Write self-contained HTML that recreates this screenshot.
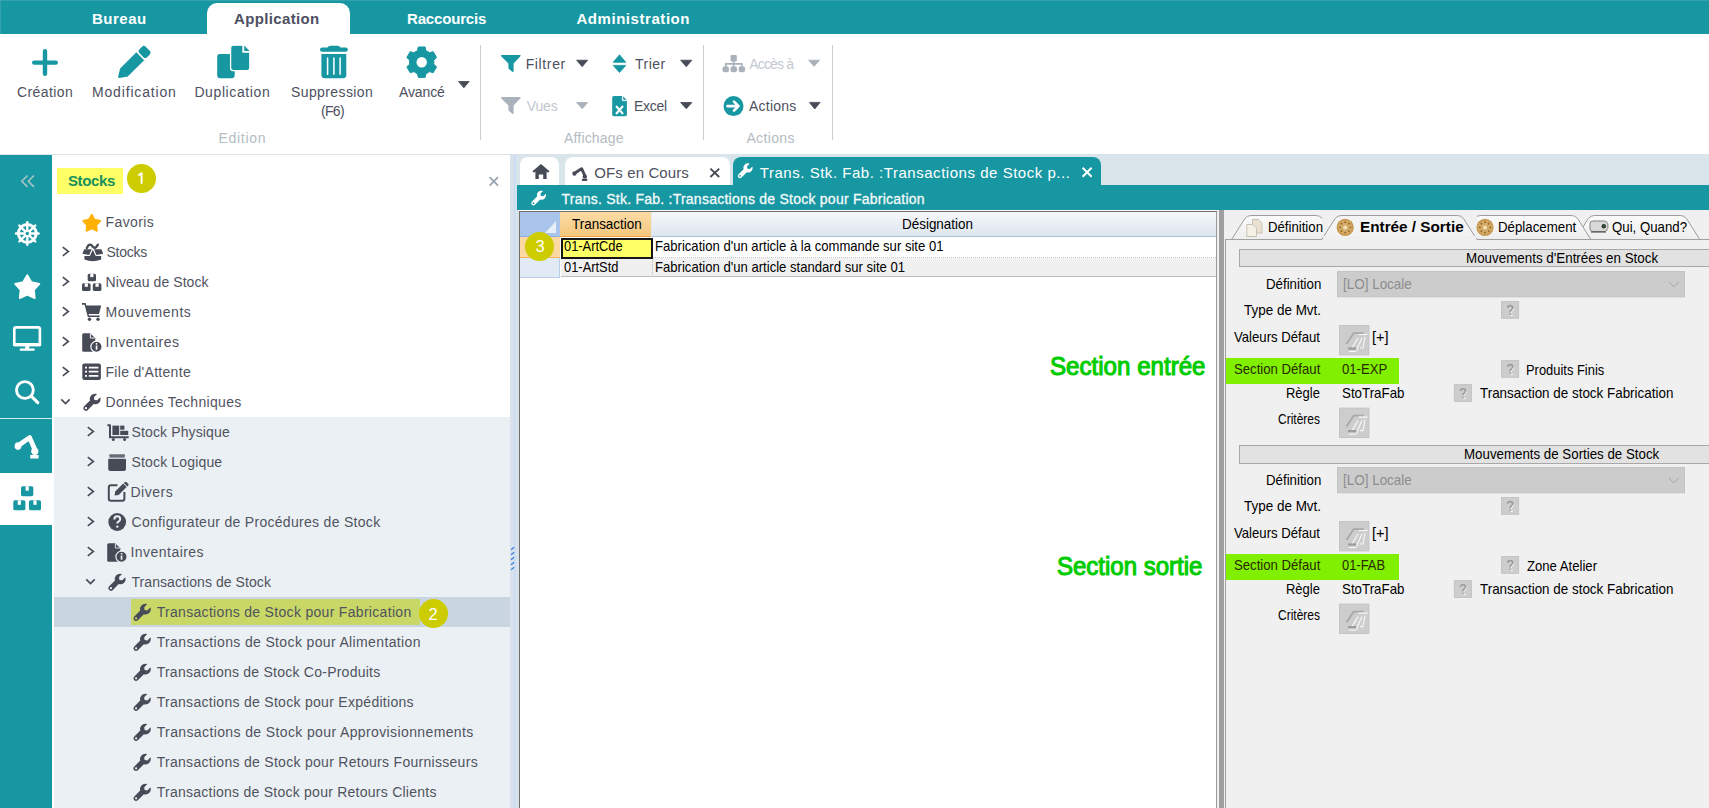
<!DOCTYPE html>
<html><head><meta charset="utf-8">
<style>
*{margin:0;padding:0;box-sizing:border-box}
html,body{width:1709px;height:808px;overflow:hidden;background:#fff;font-family:"Liberation Sans",sans-serif}
.a{position:absolute}
.t{position:absolute;line-height:1;white-space:nowrap}
.teal{background:#1797a2}
svg{position:absolute;overflow:visible}
</style></head><body>

<!-- top bar -->
<div class="a teal" style="left:0;top:0;width:1709px;height:34px"></div>
<div class="a" style="left:0;top:0;width:1709px;height:1px;background:#33a3ab"></div>
<div class="a" style="left:0;top:0;width:1px;height:34px;background:#33a3ab"></div>
<div class="a" style="left:207px;top:3px;width:143px;height:31px;background:#fff;border-radius:10px 10px 0 0"></div>
<!-- ribbon separators -->
<div class="a" style="left:480px;top:45px;width:1px;height:95px;background:#c9ced4"></div>
<div class="a" style="left:703px;top:45px;width:1px;height:95px;background:#c9ced4"></div>
<div class="a" style="left:832px;top:45px;width:1px;height:95px;background:#c9ced4"></div>
<!-- ribbon bottom line -->
<div class="a" style="left:0;top:154px;width:1709px;height:1px;background:#dce4eb"></div>
<!-- left sidebar -->
<div class="a teal" style="left:0;top:155px;width:52px;height:653px"></div>
<div class="a" style="left:0;top:418px;width:52px;height:1px;background:#d9ecee"></div>
<div class="a" style="left:0;top:473px;width:52px;height:52px;background:#fff"></div>
<!-- tree panel -->
<div class="a" style="left:54px;top:417px;width:456px;height:391px;background:#ebf0f4"></div>
<div class="a" style="left:54px;top:597px;width:456px;height:30px;background:#c9d6e1"></div>
<div class="a" style="left:131px;top:599px;width:289px;height:26px;background:#c8d766"></div>
<div class="a" style="left:57px;top:168px;width:66px;height:26px;background:#ffff66"></div>
<!-- splitter -->
<div class="a" style="left:510px;top:155px;width:9px;height:653px;background:#d9e2ea"></div>
<div class="a" style="left:514px;top:155px;width:1px;height:653px;background:#c4dcf8"></div>
<div class="a" style="left:515px;top:155px;width:1px;height:653px;background:#d0e0f2"></div>
<!-- content tab strip -->
<div class="a" style="left:516px;top:155px;width:1193px;height:30px;background:#dae4eb"></div>
<div class="a" style="left:520px;top:157px;width:39px;height:28px;background:#fff;border-radius:8px 8px 0 0"></div>
<div class="a" style="left:565px;top:157px;width:165px;height:28px;background:#fff;border-radius:8px 8px 0 0"></div>
<div class="a teal" style="left:733px;top:157px;width:368px;height:28px;border-radius:8px 8px 0 0"></div>
<div class="a teal" style="left:517px;top:185px;width:1192px;height:25px"></div>
<!-- grid -->
<div class="a" style="left:1216px;top:210px;width:8px;height:598px;background:#f0f0f0"></div>
<div class="a" style="left:519px;top:211px;width:698px;height:597px;background:#fff;border-left:1px solid #6e6e6e;border-top:1px solid #6e6e6e;border-right:1px solid #9a9a9a"></div>
<div class="a" style="left:1219px;top:210px;width:5px;height:598px;background:#a0a0a0"></div>
<!-- grid header -->
<div class="a" style="left:520px;top:212px;width:40px;height:24px;background:#a9c5eb"></div>
<div class="a" style="left:520px;top:236px;width:40px;height:1px;background:#8fb0dc"></div>
<div class="a" style="left:560px;top:212px;width:91px;height:25px;background:linear-gradient(#fbdca6,#f4c77d);border-bottom:1px solid #f0a040"></div>
<div class="a" style="left:651px;top:212px;width:565px;height:25px;background:linear-gradient(#f6f8fb,#dde5ef);border-bottom:1px solid #a8c0dc;border-left:1px solid #e4e9f0"></div>
<svg style="left:520px;top:212px" width="40" height="24"><path d="M36,9 L36,21 L25,21 Z" fill="#e6eef8"/></svg>
<!-- grid rows -->
<div class="a" style="left:520px;top:237px;width:40px;height:21px;background:#fcd9a3;border-bottom:1px solid #f5b060"></div>
<div class="a" style="left:651px;top:237px;width:565px;height:21px;background:#fff;border-bottom:1px dotted #c8c8c8"></div>
<div class="a" style="left:520px;top:258px;width:40px;height:19px;background:#e1eaf5;border-right:1px solid #b8cde6"></div>
<div class="a" style="left:561px;top:258px;width:655px;height:19px;background:#f0f0f0;border-bottom:1px solid #bdbdbd"></div>
<div class="a" style="left:652px;top:258px;width:1px;height:19px;border-left:1px dotted #c0c0c0"></div>
<div class="a" style="left:520px;top:277px;width:40px;height:1px;background:#b8cde6"></div>
<div class="a" style="left:561px;top:238px;width:92px;height:21px;background:#ffff66;border:2px solid #161616"></div>
<!-- right panel -->
<div class="a" style="left:1224px;top:210px;width:485px;height:598px;background:#f0f0f0"></div>
<div class="a" style="left:1225px;top:239px;width:1px;height:569px;background:#a0a0a0"></div>
<div class="a" style="left:1226px;top:358px;width:173px;height:26px;background:#80f000"></div>
<div class="a" style="left:1226px;top:554px;width:173px;height:26px;background:#80f000"></div>
<div class="a" style="left:1239px;top:249px;width:470px;height:18px;background:#e2e2e2;border:1px solid #a8a8a8;border-right:none"></div>
<div class="a" style="left:1239px;top:445px;width:470px;height:19px;background:#e2e2e2;border:1px solid #a8a8a8;border-right:none"></div>
<svg style="left:0;top:0" width="1709" height="808" viewBox="0 0 1709 808">
<path d="M45,51.2 V73.8 M34.2,62.6 H55.8" stroke="#1797a2" stroke-width="4.4" stroke-linecap="round" fill="none"/>
<g transform="translate(118.6,77.9) rotate(-45)" fill="#1797a2"><path d="M0.2,-0.9 Q-0.3,0 0.5,0.6 L7.5,5.5 V-5.5 Z"/><rect x="7" y="-5.5" width="23.6" height="11"/><rect x="32.2" y="-5.5" width="9" height="11" rx="2.6"/></g>
<rect x="217.2" y="54" width="17.5" height="24.2" rx="2.4" fill="#1797a2"/>
<path d="M233.4,45.2 H243 V52 H249.8 V68 Q249.8,70.6 247.2,70.6 H233.4 Q230.6,70.6 230.6,68 V48 Q230.6,45.2 233.4,45.2 Z" fill="#1797a2" stroke="#fff" stroke-width="1.3"/>
<path d="M244.2,45.6 L249.6,51 L244.2,51 Z" fill="#1797a2"/>
<rect x="320" y="47.4" width="27.8" height="4.4" rx="2.2" fill="#1797a2"/>
<path d="M327.6,48 Q328,45.8 330.5,45.8 H337.5 Q340,45.8 340.4,48 Z" fill="#1797a2"/>
<path d="M321.4,53.9 H346.3 V75 Q346.3,78.3 343,78.3 H324.7 Q321.4,78.3 321.4,75 Z" fill="#1797a2"/>
<path d="M327.6,58 V74.2 M333.9,58 V74.2 M340.1,58 V74.2" stroke="#fff" stroke-width="1.5" stroke-linecap="round"/>
<path d="M417.45,50.76 L418.30,46.98 L425.10,46.98 L425.95,50.76 A12.2,12.2 0 0 1 429.48,52.80 L433.19,51.64 L436.59,57.53 L433.73,60.16 A12.2,12.2 0 0 1 433.73,64.24 L436.59,66.87 L433.19,72.76 L429.48,71.60 A12.2,12.2 0 0 1 425.95,73.64 L425.10,77.42 L418.30,77.42 L417.45,73.64 A12.2,12.2 0 0 1 413.92,71.60 L410.21,72.76 L406.81,66.87 L409.67,64.24 A12.2,12.2 0 0 1 409.67,60.16 L406.81,57.53 L410.21,51.64 L413.92,52.80 A12.2,12.2 0 0 1 417.45,50.76 Z" fill="#1797a2" stroke="#1797a2" stroke-width="1" stroke-linejoin="round"/><circle cx="421.7" cy="62.2" r="5.2" fill="#fff"/>
<path d="M458.5,81.5 L469.2,81.5 L463.85,87.8 Z" fill="#474b57" stroke="#474b57" stroke-width="0.8" stroke-linejoin="round"/>
<path d="M501.6,55 H520 Q521.2,55 520.4,56.2 L513.6,63.6 V71.2 Q513.4,72.3 512.3,71.8 L509,69 Q508.4,68.5 508.4,67.6 V63.6 L501.2,56.2 Q500.6,55 501.6,55 Z" fill="#1797a2"/>
<path d="M501.6,97 H520 Q521.2,97 520.4,98.2 L513.6,105.6 V113.2 Q513.4,114.3 512.3,113.8 L509,111 Q508.4,110.5 508.4,109.6 V105.6 L501.2,98.2 Q500.6,97 501.6,97 Z" fill="#a9b1ba"/>
<path d="M576.6,60.2 L587.7,60.2 L582.1500000000001,66.7 Z" fill="#474b57" stroke="#474b57" stroke-width="0.8" stroke-linejoin="round"/>
<path d="M576.6,102.5 L587.7,102.5 L582.1500000000001,108.8 Z" fill="#a9b1ba" stroke="#a9b1ba" stroke-width="0.8" stroke-linejoin="round"/>
<path d="M613.2,62.3 H625.8 L619.5,54.8 Z M613.2,65.4 H625.8 L619.5,72.5 Z" fill="#1797a2" stroke="#1797a2" stroke-width="0.8" stroke-linejoin="round"/>
<path d="M680.6,60.2 L691.9,60.2 L686.25,66.7 Z" fill="#474b57" stroke="#474b57" stroke-width="0.8" stroke-linejoin="round"/>
<path d="M613.8,96.1 H622.4 L626.9,100.6 V114.4 Q626.9,116.2 625.1,116.2 H614 Q612.2,116.2 612.2,114.4 V97.9 Q612.2,96.1 613.8,96.1 Z" fill="#1797a2"/>
<path d="M622.4,96.1 V100.6 H626.9" fill="#fff" stroke="#fff" stroke-width="0.9"/>
<path d="M623.2,96.5 L626.5,99.8 L623.2,99.8 Z" fill="#1797a2"/>
<path d="M616,106 L623,114 M623,106 L616,114" stroke="#fff" stroke-width="2"/>
<path d="M680.6,102.5 L691.9,102.5 L686.25,108.8 Z" fill="#474b57" stroke="#474b57" stroke-width="0.8" stroke-linejoin="round"/>
<g fill="#a9b1ba"><rect x="730.6" y="55.1" width="6.2" height="6.3" rx="1.2"/><rect x="722.5" y="66.2" width="6.5" height="6" rx="2.2"/><rect x="730.5" y="66.2" width="6.5" height="6" rx="2.2"/><rect x="738.6" y="66.2" width="6.5" height="6" rx="2.2"/></g><path d="M733.7,61 V66.5 M725.7,66.5 V63.9 H741.8 V66.5" stroke="#a9b1ba" stroke-width="1.6" fill="none"/>
<path d="M808.6,60.2 L819.7,60.2 L814.1500000000001,66.3 Z" fill="#a9b1ba" stroke="#a9b1ba" stroke-width="0.8" stroke-linejoin="round"/>
<circle cx="733.5" cy="106.1" r="10" fill="#1797a2"/>
<path d="M727.5,106.1 H738 M734,101.6 L738.5,106.1 L734,110.6" stroke="#fff" stroke-width="2.6" fill="none" stroke-linecap="round" stroke-linejoin="round"/>
<path d="M809.4,102.4 L820.1,102.4 L814.75,109 Z" fill="#474b57" stroke="#474b57" stroke-width="0.8" stroke-linejoin="round"/>
<path d="M27.5,175.5 L21.8,181.2 L27.5,186.9 M34,175.5 L28.3,181.2 L34,186.9" stroke="#a6c3c7" stroke-width="1.6" fill="none"/>
<circle cx="27.3" cy="233.5" r="8.9" stroke="#fff" stroke-width="3" fill="none"/><path d="M30.30,233.50 L38.60,233.50 M29.42,235.62 L35.29,241.49 M27.30,236.50 L27.30,244.80 M25.18,235.62 L19.31,241.49 M24.30,233.50 L16.00,233.50 M25.18,231.38 L19.31,225.51 M27.30,230.50 L27.30,222.20 M29.42,231.38 L35.29,225.51 " stroke="#fff" stroke-width="2.4" stroke-linecap="round"/><circle cx="27.3" cy="233.5" r="3.6" fill="#fff"/><circle cx="27.3" cy="233.5" r="1.7" fill="#1797a2"/>
<polygon points="27.25,275.10 31.36,282.15 39.33,283.88 33.89,289.96 34.71,298.07 27.25,294.79 19.79,298.07 20.61,289.96 15.17,283.88 23.14,282.15" fill="#fff" stroke="#fff" stroke-width="1.8" stroke-linejoin="round"/>
<rect x="14.3" y="327.4" width="25.6" height="17.6" rx="1.8" stroke="#fff" stroke-width="2.6" fill="none"/><rect x="13" y="343" width="28.2" height="3.2" rx="1" fill="#fff"/><rect x="25.2" y="345" width="4" height="4" fill="#fff"/><rect x="19.7" y="348.5" width="15" height="2.2" rx="0.8" fill="#fff"/>
<circle cx="24.9" cy="390" r="8.4" stroke="#fff" stroke-width="2.9" fill="none"/><path d="M31.2,396.2 L37.8,402.6" stroke="#fff" stroke-width="3.2" stroke-linecap="round"/>
<g fill="#fff"><ellipse cx="18" cy="446.1" rx="3.4" ry="3.8"/><circle cx="34.8" cy="451.3" r="3.6"/><rect x="30.2" y="455" width="8.4" height="3.6" rx="0.6"/></g><path d="M20.8,443.8 L29.6,437.6 L34.2,448" stroke="#fff" stroke-width="4.8" stroke-linecap="round" stroke-linejoin="round" fill="none"/>
<rect x="21" y="486.2" width="12.3" height="10" rx="1.6" fill="#1797a2"/><rect x="25.549999999999997" y="486.2" width="3.2" height="4.5" fill="#fff"/>
<rect x="13.3" y="500.3" width="12.1" height="10" rx="1.6" fill="#1797a2"/><rect x="17.75" y="500.3" width="3.2" height="4.5" fill="#fff"/>
<rect x="29" y="500.3" width="12" height="10" rx="1.6" fill="#1797a2"/><rect x="33.4" y="500.3" width="3.2" height="4.5" fill="#fff"/>
<path d="M511.4,549.4 L513.8,547.6" stroke="#3d7fdc" stroke-width="1.3" stroke-linecap="round"/><path d="M511.4,554.4 L513.8,552.6" stroke="#3d7fdc" stroke-width="1.3" stroke-linecap="round"/><path d="M511.4,559.4 L513.8,557.6" stroke="#3d7fdc" stroke-width="1.3" stroke-linecap="round"/><path d="M511.4,564.4 L513.8,562.6" stroke="#3d7fdc" stroke-width="1.3" stroke-linecap="round"/><path d="M511.4,569.4 L513.8,567.6" stroke="#3d7fdc" stroke-width="1.3" stroke-linecap="round"/>
<path d="M489.6,177.2 L498,185.6 M498,177.2 L489.6,185.6" stroke="#9aa4ae" stroke-width="1.8"/>
<path d="M62.8,247.2 L68.39999999999999,251.5 L62.8,255.8" stroke="#474b57" stroke-width="1.6" fill="none"/>
<path d="M62.8,277.2 L68.39999999999999,281.5 L62.8,285.8" stroke="#474b57" stroke-width="1.6" fill="none"/>
<path d="M62.8,307.2 L68.39999999999999,311.5 L62.8,315.8" stroke="#474b57" stroke-width="1.6" fill="none"/>
<path d="M62.8,337.2 L68.39999999999999,341.5 L62.8,345.8" stroke="#474b57" stroke-width="1.6" fill="none"/>
<path d="M62.8,367.2 L68.39999999999999,371.5 L62.8,375.8" stroke="#474b57" stroke-width="1.6" fill="none"/>
<path d="M61.3,399.4 L65.5,403.6 L69.7,399.4" stroke="#474b57" stroke-width="1.6" fill="none"/>
<path d="M87.8,427.2 L93.39999999999999,431.5 L87.8,435.8" stroke="#474b57" stroke-width="1.6" fill="none"/>
<path d="M87.8,457.2 L93.39999999999999,461.5 L87.8,465.8" stroke="#474b57" stroke-width="1.6" fill="none"/>
<path d="M87.8,487.2 L93.39999999999999,491.5 L87.8,495.8" stroke="#474b57" stroke-width="1.6" fill="none"/>
<path d="M87.8,517.2 L93.39999999999999,521.5 L87.8,525.8" stroke="#474b57" stroke-width="1.6" fill="none"/>
<path d="M87.8,547.2 L93.39999999999999,551.5 L87.8,555.8" stroke="#474b57" stroke-width="1.6" fill="none"/>
<path d="M86.3,579.4 L90.5,583.6 L94.7,579.4" stroke="#474b57" stroke-width="1.6" fill="none"/>
<polygon points="91.70,214.40 94.67,219.51 100.45,220.76 96.51,225.16 97.11,231.04 91.70,228.66 86.29,231.04 86.89,225.16 82.95,220.76 88.73,219.51" fill="#ffb000" stroke="#ffb000" stroke-width="1.4" stroke-linejoin="round"/>
<g fill="#474b57"><path d="M84.2,249.2 H91.6 L89.2,255 L82.4,253.8 Z"/><path d="M101.4,249.2 H94 L96.4,255 L103.2,253.8 Z"/><path d="M84.4,256.1 H89.9 L92.8,249.8 L95.7,256.1 H101.2 V259.6 Q92.8,263 84.4,259.6 Z"/></g><path d="M86.8,248.2 Q88.4,244 90.8,244.8 Q92.2,245.6 93.4,247.4 Q95.6,248.8 97.9,244.6" stroke="#474b57" stroke-width="2.3" fill="none" stroke-linecap="round"/>
<rect x="87.7" y="273.7" width="8.3" height="7.6" rx="1.6" fill="#474b57"/><rect x="90.25000000000001" y="273.7" width="3.2" height="3.4" fill="#fff"/><rect x="82" y="283.3" width="8.6" height="7.7" rx="1.6" fill="#474b57"/><rect x="84.7" y="283.3" width="3.2" height="3.5" fill="#fff"/><rect x="92.8" y="283.3" width="8.6" height="7.7" rx="1.6" fill="#474b57"/><rect x="95.5" y="283.3" width="3.2" height="3.5" fill="#fff"/>
<g fill="#474b57"><path d="M82,303 H85.6 L86.4,305.5 H101.2 L99,314 H88.5 L89,315.5 H99.6 V317 H87.8 L84.6,304.8 H82 Z"/><circle cx="89.5" cy="319.3" r="1.7"/><circle cx="98" cy="319.3" r="1.7"/></g>
<g transform="translate(82.2,333.2)"><path d="M0,1.5 Q0,0 1.5,0 H8 L13,5 V17 Q13,18.5 11.5,18.5 H1.5 Q0,18.5 0,17 Z" fill="#474b57"/><path d="M8.2,0.3 V4.8 H12.7" stroke="#fff" stroke-width="0.9" fill="none"/><circle cx="14.3" cy="13.6" r="5.6" fill="#474b57" stroke="#fff" stroke-width="1.2"/><rect x="13.5" y="12.3" width="1.7" height="4.2" fill="#fff"/><circle cx="14.35" cy="10.6" r="0.9" fill="#fff"/></g>
<rect x="82.3" y="363.4" width="18.6" height="16.6" rx="2" fill="#474b57"/><path d="M85,367.6 H87 M85,371.7 H87 M85,375.8 H87 M88.8,367.6 H98.4 M88.8,371.7 H98.4 M88.8,375.8 H98.4" stroke="#fff" stroke-width="1.8"/>
<g transform="translate(83,393.5) scale(1.0)"><path d="M17.3,3.7 L14.2,6.8 L11.4,6.4 L11,3.6 L14.1,0.5 Q10.5,-0.6 8.2,1.8 Q6.2,3.9 7,7 L0.9,13.1 Q-0.6,14.9 1,16.6 Q2.8,18.2 4.6,16.7 L10.7,10.6 Q13.8,11.5 15.9,9.4 Q18.3,7.2 17.3,3.7 Z" fill="#474b57"/><circle cx="2.9" cy="14.7" r="1.1" fill="#fff"/></g>
<g fill="#474b57"><path d="M107.4,424.2 H110 Q111,424.2 111,425.2 V436.2 H128.7 V438.2 H109 V426.2 H107.4 Z"/><rect x="112.4" y="425.6" width="6.8" height="9.4"/><rect x="120.2" y="425.6" width="4.2" height="4.1"/><rect x="120.2" y="430.8" width="8" height="4.2"/><circle cx="113.3" cy="439.6" r="1.5"/><circle cx="124.6" cy="439.6" r="1.5"/></g>
<g fill="#474b57"><rect x="109.2" y="454.3" width="15.8" height="2.6" rx="0.8" opacity="0.8"/><rect x="108.2" y="457.6" width="17.8" height="13.4" rx="2"/></g><path d="M108.2,458.5 H126" stroke="#ebf0f4" stroke-width="0.8"/>
<path d="M117.5,485.2 H111 Q108.8,485.2 108.8,487.4 V498.6 Q108.8,500.8 111,500.8 H122.2 Q124.4,500.8 124.4,498.6 V492" stroke="#474b57" stroke-width="2" fill="none"/><path d="M114.6,495.4 L115.2,491.6 L123.2,483.6 L126.6,487 L118.6,495 Z" fill="#474b57"/><path d="M124.6,482.2 Q125.6,481.4 126.6,482.2 L128.2,483.8 Q129,484.8 128.2,485.8 L127.3,486.5 L123.8,483 Z" fill="#474b57"/>
<circle cx="117.2" cy="522" r="8.9" fill="#474b57"/><path d="M114.4,519.5 Q114.4,516.3 117.3,516.3 Q120.2,516.3 120.2,519.1 Q120.2,520.8 118.2,521.8 Q117.3,522.4 117.3,523.6" stroke="#ebf0f4" stroke-width="2" fill="none"/><circle cx="117.3" cy="526.6" r="1.2" fill="#ebf0f4"/>
<g transform="translate(107.2,543.2)"><path d="M0,1.5 Q0,0 1.5,0 H8 L13,5 V17 Q13,18.5 11.5,18.5 H1.5 Q0,18.5 0,17 Z" fill="#474b57"/><path d="M8.2,0.3 V4.8 H12.7" stroke="#ebf0f4" stroke-width="0.9" fill="none"/><circle cx="14.3" cy="13.6" r="5.6" fill="#474b57" stroke="#ebf0f4" stroke-width="1.2"/><rect x="13.5" y="12.3" width="1.7" height="4.2" fill="#ebf0f4"/><circle cx="14.35" cy="10.6" r="0.9" fill="#ebf0f4"/></g>
<g transform="translate(108,573.5) scale(1.0)"><path d="M17.3,3.7 L14.2,6.8 L11.4,6.4 L11,3.6 L14.1,0.5 Q10.5,-0.6 8.2,1.8 Q6.2,3.9 7,7 L0.9,13.1 Q-0.6,14.9 1,16.6 Q2.8,18.2 4.6,16.7 L10.7,10.6 Q13.8,11.5 15.9,9.4 Q18.3,7.2 17.3,3.7 Z" fill="#474b57"/><circle cx="2.9" cy="14.7" r="1.1" fill="#ebf0f4"/></g>
<g transform="translate(133.2,603.6) scale(1.0)"><path d="M17.3,3.7 L14.2,6.8 L11.4,6.4 L11,3.6 L14.1,0.5 Q10.5,-0.6 8.2,1.8 Q6.2,3.9 7,7 L0.9,13.1 Q-0.6,14.9 1,16.6 Q2.8,18.2 4.6,16.7 L10.7,10.6 Q13.8,11.5 15.9,9.4 Q18.3,7.2 17.3,3.7 Z" fill="#474b57"/><circle cx="2.9" cy="14.7" r="1.1" fill="#c8d766"/></g>
<g transform="translate(133.2,633.6) scale(1.0)"><path d="M17.3,3.7 L14.2,6.8 L11.4,6.4 L11,3.6 L14.1,0.5 Q10.5,-0.6 8.2,1.8 Q6.2,3.9 7,7 L0.9,13.1 Q-0.6,14.9 1,16.6 Q2.8,18.2 4.6,16.7 L10.7,10.6 Q13.8,11.5 15.9,9.4 Q18.3,7.2 17.3,3.7 Z" fill="#474b57"/><circle cx="2.9" cy="14.7" r="1.1" fill="#ebf0f4"/></g>
<g transform="translate(133.2,663.6) scale(1.0)"><path d="M17.3,3.7 L14.2,6.8 L11.4,6.4 L11,3.6 L14.1,0.5 Q10.5,-0.6 8.2,1.8 Q6.2,3.9 7,7 L0.9,13.1 Q-0.6,14.9 1,16.6 Q2.8,18.2 4.6,16.7 L10.7,10.6 Q13.8,11.5 15.9,9.4 Q18.3,7.2 17.3,3.7 Z" fill="#474b57"/><circle cx="2.9" cy="14.7" r="1.1" fill="#ebf0f4"/></g>
<g transform="translate(133.2,693.6) scale(1.0)"><path d="M17.3,3.7 L14.2,6.8 L11.4,6.4 L11,3.6 L14.1,0.5 Q10.5,-0.6 8.2,1.8 Q6.2,3.9 7,7 L0.9,13.1 Q-0.6,14.9 1,16.6 Q2.8,18.2 4.6,16.7 L10.7,10.6 Q13.8,11.5 15.9,9.4 Q18.3,7.2 17.3,3.7 Z" fill="#474b57"/><circle cx="2.9" cy="14.7" r="1.1" fill="#ebf0f4"/></g>
<g transform="translate(133.2,723.6) scale(1.0)"><path d="M17.3,3.7 L14.2,6.8 L11.4,6.4 L11,3.6 L14.1,0.5 Q10.5,-0.6 8.2,1.8 Q6.2,3.9 7,7 L0.9,13.1 Q-0.6,14.9 1,16.6 Q2.8,18.2 4.6,16.7 L10.7,10.6 Q13.8,11.5 15.9,9.4 Q18.3,7.2 17.3,3.7 Z" fill="#474b57"/><circle cx="2.9" cy="14.7" r="1.1" fill="#ebf0f4"/></g>
<g transform="translate(133.2,753.6) scale(1.0)"><path d="M17.3,3.7 L14.2,6.8 L11.4,6.4 L11,3.6 L14.1,0.5 Q10.5,-0.6 8.2,1.8 Q6.2,3.9 7,7 L0.9,13.1 Q-0.6,14.9 1,16.6 Q2.8,18.2 4.6,16.7 L10.7,10.6 Q13.8,11.5 15.9,9.4 Q18.3,7.2 17.3,3.7 Z" fill="#474b57"/><circle cx="2.9" cy="14.7" r="1.1" fill="#ebf0f4"/></g>
<g transform="translate(133.2,783.6) scale(1.0)"><path d="M17.3,3.7 L14.2,6.8 L11.4,6.4 L11,3.6 L14.1,0.5 Q10.5,-0.6 8.2,1.8 Q6.2,3.9 7,7 L0.9,13.1 Q-0.6,14.9 1,16.6 Q2.8,18.2 4.6,16.7 L10.7,10.6 Q13.8,11.5 15.9,9.4 Q18.3,7.2 17.3,3.7 Z" fill="#474b57"/><circle cx="2.9" cy="14.7" r="1.1" fill="#ebf0f4"/></g>
<path d="M532.4,171.2 L541,163.9 L549.5,171.2 L548,172.8 L546.6,171.6 V178.9 H543.2 V174.4 H538.8 V178.9 H535.4 V171.6 L534,172.8 Z" fill="#474b57"/>
<g transform="translate(572.3,166.4) scale(0.62,0.585) translate(-14.6,-433.8)"><g fill="#474b57"><ellipse cx="18" cy="446.1" rx="3.4" ry="3.8"/><circle cx="34.8" cy="451.3" r="3.6"/><rect x="30.2" y="455" width="8.4" height="3.6" rx="0.6"/></g><path d="M20.8,443.8 L29.6,437.6 L34.2,448" stroke="#474b57" stroke-width="4.8" stroke-linecap="round" stroke-linejoin="round" fill="none"/></g>
<path d="M710.4,168.6 L719.2,177 M719.2,168.6 L710.4,177" stroke="#474b57" stroke-width="1.9"/>
<g transform="translate(737.6,163.2) scale(0.86)"><path d="M17.3,3.7 L14.2,6.8 L11.4,6.4 L11,3.6 L14.1,0.5 Q10.5,-0.6 8.2,1.8 Q6.2,3.9 7,7 L0.9,13.1 Q-0.6,14.9 1,16.6 Q2.8,18.2 4.6,16.7 L10.7,10.6 Q13.8,11.5 15.9,9.4 Q18.3,7.2 17.3,3.7 Z" fill="#fff"/><circle cx="2.9" cy="14.7" r="1.1" fill="#1797a2"/></g>
<path d="M1082.6,167.8 L1091.6,176.8 M1091.6,167.8 L1082.6,176.8" stroke="#fff" stroke-width="2"/>
<g transform="translate(531,190.5) scale(0.86)"><path d="M17.3,3.7 L14.2,6.8 L11.4,6.4 L11,3.6 L14.1,0.5 Q10.5,-0.6 8.2,1.8 Q6.2,3.9 7,7 L0.9,13.1 Q-0.6,14.9 1,16.6 Q2.8,18.2 4.6,16.7 L10.7,10.6 Q13.8,11.5 15.9,9.4 Q18.3,7.2 17.3,3.7 Z" fill="#fff"/><circle cx="2.9" cy="14.7" r="1.1" fill="#1797a2"/></g>
<defs><linearGradient id="tabg" x1="0" y1="0" x2="0" y2="1"><stop offset="0" stop-color="#fafafa"/><stop offset="1" stop-color="#eeeeee"/></linearGradient></defs>
<path d="M1575,239.5 L1588.3,218.5 Q1590.8,215.5 1594.3,215.5 H1680.5 Q1684.0,215.5 1686.5,218.5 L1699.8,239.5" fill="url(#tabg)" stroke="#9c9c9c" stroke-width="1"/>
<path d="M1461,239.5 L1474.3,218.5 Q1476.8,215.5 1480.3,215.5 H1571.6000000000001 Q1575.1000000000001,215.5 1577.6000000000001,218.5 L1590.9,239.5" fill="url(#tabg)" stroke="#9c9c9c" stroke-width="1"/>
<path d="M1231.6,239.5 L1244.8999999999999,218.5 Q1247.3999999999999,215.5 1250.8999999999999,215.5 H1316.2 Q1319.7,215.5 1322.2,218.5 L1335.5,239.5" fill="url(#tabg)" stroke="#9c9c9c" stroke-width="1"/>
<path d="M1225.5,808 V239.5 H1709" fill="none" stroke="#a0a0a0" stroke-width="1"/>
<rect x="1322" y="216" width="155" height="24.5" fill="#f0f0f0"/>
<path d="M1321.8,239.5 L1335.1,218.5 Q1337.6,215.5 1341.1,215.5 H1457.5 Q1461.0,215.5 1463.5,218.5 L1476.8,239.5" fill="#f3f3f3" stroke="#9c9c9c" stroke-width="1"/>
<rect x="1323" y="236" width="153" height="4" fill="#f0f0f0"/>
<g stroke="#bdb6a6" stroke-width="0.8"><path d="M1252.5,219.5 H1258.5 L1262,223 V233 H1252.5 Z" fill="#e9e2d2"/><path d="M1246.8,224.5 H1253 L1256.5,228 V236.5 H1246.8 Z" fill="#f6f1e6"/></g>
<circle cx="1345.2" cy="227.4" r="8.6" fill="#c89a52"/><circle cx="1345.2" cy="227.4" r="7" fill="#d4aa66"/><circle cx="1350.40" cy="227.40" r="0.9" fill="#8a6428"/><circle cx="1348.88" cy="231.08" r="0.9" fill="#8a6428"/><circle cx="1345.20" cy="232.60" r="0.9" fill="#8a6428"/><circle cx="1341.52" cy="231.08" r="0.9" fill="#8a6428"/><circle cx="1340.00" cy="227.40" r="0.9" fill="#8a6428"/><circle cx="1341.52" cy="223.72" r="0.9" fill="#8a6428"/><circle cx="1345.20" cy="222.20" r="0.9" fill="#8a6428"/><circle cx="1348.88" cy="223.72" r="0.9" fill="#8a6428"/><circle cx="1345.2" cy="227.4" r="2" fill="#f2e0b8"/>
<circle cx="1485" cy="227.4" r="8.6" fill="#c89a52"/><circle cx="1485" cy="227.4" r="7" fill="#d4aa66"/><circle cx="1490.20" cy="227.40" r="0.9" fill="#8a6428"/><circle cx="1488.68" cy="231.08" r="0.9" fill="#8a6428"/><circle cx="1485.00" cy="232.60" r="0.9" fill="#8a6428"/><circle cx="1481.32" cy="231.08" r="0.9" fill="#8a6428"/><circle cx="1479.80" cy="227.40" r="0.9" fill="#8a6428"/><circle cx="1481.32" cy="223.72" r="0.9" fill="#8a6428"/><circle cx="1485.00" cy="222.20" r="0.9" fill="#8a6428"/><circle cx="1488.68" cy="223.72" r="0.9" fill="#8a6428"/><circle cx="1485" cy="227.4" r="2" fill="#f2e0b8"/>
<g><path d="M1590,223.5 Q1590,221 1593,221 H1604 Q1608,221 1608,226 Q1608,231.5 1604,231.5 H1593 Q1590,231.5 1590,229 Z" fill="#d8d8d8" stroke="#7a7a7a" stroke-width="0.9"/><circle cx="1603.8" cy="226.2" r="2.2" fill="#333"/><circle cx="1603.8" cy="226.2" r="0.8" fill="#2a8a2a"/><path d="M1591,232 H1606" stroke="#555" stroke-width="1.2"/></g>
<rect x="1337.5" y="271.5" width="347" height="25.3" fill="#cccccc" stroke="#c3c3c3" stroke-width="1"/>
<path d="M1668.8,281.8 L1673.8,286.8 L1678.8,281.8" stroke="#a6a6a6" stroke-width="1" fill="none"/>
<rect x="1339.5" y="325.5" width="29.4" height="29.4" fill="#cdcdcd" stroke="#c4c4c4" stroke-width="1"/>
<g transform="translate(1339,325)"><path d="M10,21 L18,9 H29" stroke="#a8a8a8" stroke-width="2" fill="none" transform="translate(-1.5,0) scale(0.9)"/><path d="M19.5,9.5 H28.5 M19,13 L13,23 M23,13 L18,24 M26,12 L24,23 H21" stroke="#f8f8f8" stroke-width="1.1" fill="none"/><path d="M9,23.5 H17" stroke="#9c9c9c" stroke-width="2.2"/><path d="M10,26.5 H17 L19,24" stroke="#fafafa" stroke-width="1" fill="none"/></g>
<rect x="1339.5" y="408.1" width="29.4" height="29.4" fill="#cdcdcd" stroke="#c4c4c4" stroke-width="1"/>
<g transform="translate(1339,407.6)"><path d="M10,21 L18,9 H29" stroke="#a8a8a8" stroke-width="2" fill="none" transform="translate(-1.5,0) scale(0.9)"/><path d="M19.5,9.5 H28.5 M19,13 L13,23 M23,13 L18,24 M26,12 L24,23 H21" stroke="#f8f8f8" stroke-width="1.1" fill="none"/><path d="M9,23.5 H17" stroke="#9c9c9c" stroke-width="2.2"/><path d="M10,26.5 H17 L19,24" stroke="#fafafa" stroke-width="1" fill="none"/></g>
<rect x="1501.6" y="301.5" width="17" height="16.8" fill="#cdcdcd" stroke="#c4c4c4" stroke-width="1"/>
<g transform="translate(1501.1,301)"><path d="M6.6,6.8 Q6.6,4.6 9.2,4.6 Q11.6,4.6 11.6,6.8 Q11.6,8.2 10,9.2 Q9,9.8 9,11.4" stroke="#9a9a9a" stroke-width="1.6" fill="none"/><path d="M12.4,7.6 Q12.4,9.4 10.8,10.2 Q10,10.8 10,12.2" stroke="#fafafa" stroke-width="1" fill="none"/><rect x="8.3" y="12.6" width="1.5" height="1.4" fill="#9a9a9a"/><rect x="9.6" y="13.8" width="2" height="1.2" fill="#fafafa"/></g>
<rect x="1501.6" y="360.5" width="17" height="16.8" fill="#cdcdcd" stroke="#c4c4c4" stroke-width="1"/>
<g transform="translate(1501.1,360)"><path d="M6.6,6.8 Q6.6,4.6 9.2,4.6 Q11.6,4.6 11.6,6.8 Q11.6,8.2 10,9.2 Q9,9.8 9,11.4" stroke="#9a9a9a" stroke-width="1.6" fill="none"/><path d="M12.4,7.6 Q12.4,9.4 10.8,10.2 Q10,10.8 10,12.2" stroke="#fafafa" stroke-width="1" fill="none"/><rect x="8.3" y="12.6" width="1.5" height="1.4" fill="#9a9a9a"/><rect x="9.6" y="13.8" width="2" height="1.2" fill="#fafafa"/></g>
<rect x="1454.4" y="384.6" width="17" height="16.8" fill="#cdcdcd" stroke="#c4c4c4" stroke-width="1"/>
<g transform="translate(1453.9,384.1)"><path d="M6.6,6.8 Q6.6,4.6 9.2,4.6 Q11.6,4.6 11.6,6.8 Q11.6,8.2 10,9.2 Q9,9.8 9,11.4" stroke="#9a9a9a" stroke-width="1.6" fill="none"/><path d="M12.4,7.6 Q12.4,9.4 10.8,10.2 Q10,10.8 10,12.2" stroke="#fafafa" stroke-width="1" fill="none"/><rect x="8.3" y="12.6" width="1.5" height="1.4" fill="#9a9a9a"/><rect x="9.6" y="13.8" width="2" height="1.2" fill="#fafafa"/></g>
<rect x="1337.5" y="467.5" width="347" height="25.3" fill="#cccccc" stroke="#c3c3c3" stroke-width="1"/>
<path d="M1668.8,477.8 L1673.8,482.8 L1678.8,477.8" stroke="#a6a6a6" stroke-width="1" fill="none"/>
<rect x="1339.5" y="521.5" width="29.4" height="29.4" fill="#cdcdcd" stroke="#c4c4c4" stroke-width="1"/>
<g transform="translate(1339,521)"><path d="M10,21 L18,9 H29" stroke="#a8a8a8" stroke-width="2" fill="none" transform="translate(-1.5,0) scale(0.9)"/><path d="M19.5,9.5 H28.5 M19,13 L13,23 M23,13 L18,24 M26,12 L24,23 H21" stroke="#f8f8f8" stroke-width="1.1" fill="none"/><path d="M9,23.5 H17" stroke="#9c9c9c" stroke-width="2.2"/><path d="M10,26.5 H17 L19,24" stroke="#fafafa" stroke-width="1" fill="none"/></g>
<rect x="1339.5" y="604.1" width="29.4" height="29.4" fill="#cdcdcd" stroke="#c4c4c4" stroke-width="1"/>
<g transform="translate(1339,603.6)"><path d="M10,21 L18,9 H29" stroke="#a8a8a8" stroke-width="2" fill="none" transform="translate(-1.5,0) scale(0.9)"/><path d="M19.5,9.5 H28.5 M19,13 L13,23 M23,13 L18,24 M26,12 L24,23 H21" stroke="#f8f8f8" stroke-width="1.1" fill="none"/><path d="M9,23.5 H17" stroke="#9c9c9c" stroke-width="2.2"/><path d="M10,26.5 H17 L19,24" stroke="#fafafa" stroke-width="1" fill="none"/></g>
<rect x="1501.6" y="497.5" width="17" height="16.8" fill="#cdcdcd" stroke="#c4c4c4" stroke-width="1"/>
<g transform="translate(1501.1,497)"><path d="M6.6,6.8 Q6.6,4.6 9.2,4.6 Q11.6,4.6 11.6,6.8 Q11.6,8.2 10,9.2 Q9,9.8 9,11.4" stroke="#9a9a9a" stroke-width="1.6" fill="none"/><path d="M12.4,7.6 Q12.4,9.4 10.8,10.2 Q10,10.8 10,12.2" stroke="#fafafa" stroke-width="1" fill="none"/><rect x="8.3" y="12.6" width="1.5" height="1.4" fill="#9a9a9a"/><rect x="9.6" y="13.8" width="2" height="1.2" fill="#fafafa"/></g>
<rect x="1501.6" y="556.5" width="17" height="16.8" fill="#cdcdcd" stroke="#c4c4c4" stroke-width="1"/>
<g transform="translate(1501.1,556)"><path d="M6.6,6.8 Q6.6,4.6 9.2,4.6 Q11.6,4.6 11.6,6.8 Q11.6,8.2 10,9.2 Q9,9.8 9,11.4" stroke="#9a9a9a" stroke-width="1.6" fill="none"/><path d="M12.4,7.6 Q12.4,9.4 10.8,10.2 Q10,10.8 10,12.2" stroke="#fafafa" stroke-width="1" fill="none"/><rect x="8.3" y="12.6" width="1.5" height="1.4" fill="#9a9a9a"/><rect x="9.6" y="13.8" width="2" height="1.2" fill="#fafafa"/></g>
<rect x="1454.4" y="580.6" width="17" height="16.8" fill="#cdcdcd" stroke="#c4c4c4" stroke-width="1"/>
<g transform="translate(1453.9,580.1)"><path d="M6.6,6.8 Q6.6,4.6 9.2,4.6 Q11.6,4.6 11.6,6.8 Q11.6,8.2 10,9.2 Q9,9.8 9,11.4" stroke="#9a9a9a" stroke-width="1.6" fill="none"/><path d="M12.4,7.6 Q12.4,9.4 10.8,10.2 Q10,10.8 10,12.2" stroke="#fafafa" stroke-width="1" fill="none"/><rect x="8.3" y="12.6" width="1.5" height="1.4" fill="#9a9a9a"/><rect x="9.6" y="13.8" width="2" height="1.2" fill="#fafafa"/></g>
</svg>
<div class="t" style="left:92.0px;top:11.3px;font-size:15px;color:#fff;letter-spacing:0.50px;font-weight:bold">Bureau</div>
<div class="t" style="left:234.0px;top:11.3px;font-size:15px;color:#4d5060;letter-spacing:0.35px;font-weight:bold">Application</div>
<div class="t" style="left:407.0px;top:11.3px;font-size:15px;color:#fff;letter-spacing:-0.17px;font-weight:bold">Raccourcis</div>
<div class="t" style="left:576.4px;top:11.3px;font-size:15px;color:#fff;letter-spacing:0.56px;font-weight:bold">Administration</div>
<div class="t" style="left:17.0px;top:85.1px;font-size:14px;color:#4d5060;letter-spacing:0.41px">Création</div>
<div class="t" style="left:92.0px;top:85.1px;font-size:14px;color:#4d5060;letter-spacing:0.83px">Modification</div>
<div class="t" style="left:194.4px;top:85.1px;font-size:14px;color:#4d5060;letter-spacing:0.61px">Duplication</div>
<div class="t" style="left:291.0px;top:85.1px;font-size:14px;color:#4d5060;letter-spacing:0.40px">Suppression</div>
<div class="t" style="left:321.0px;top:104.1px;font-size:14px;color:#4d5060;letter-spacing:-0.67px">(F6)</div>
<div class="t" style="left:399.0px;top:85.1px;font-size:14px;color:#4d5060;letter-spacing:-0.13px">Avancé</div>
<div class="t" style="left:218.4px;top:130.6px;font-size:14px;color:#b4bcc4;letter-spacing:0.73px">Edition</div>
<div class="t" style="left:525.7px;top:57.1px;font-size:14px;color:#4d5060;letter-spacing:0.63px">Filtrer</div>
<div class="t" style="left:635.0px;top:57.1px;font-size:14px;color:#4d5060;letter-spacing:0.50px">Trier</div>
<div class="t" style="left:526.7px;top:99.1px;font-size:14px;color:#c3c8cf;letter-spacing:-0.13px">Vues</div>
<div class="t" style="left:634.0px;top:99.1px;font-size:14px;color:#4d5060;letter-spacing:-0.28px">Excel</div>
<div class="t" style="left:749.3px;top:57.1px;font-size:14px;color:#c3c8cf;letter-spacing:-0.84px">Accès à</div>
<div class="t" style="left:749.0px;top:99.1px;font-size:14px;color:#4d5060;letter-spacing:0.23px">Actions</div>
<div class="t" style="left:564.0px;top:130.6px;font-size:14px;color:#b4bcc4;letter-spacing:0.18px">Affichage</div>
<div class="t" style="left:746.4px;top:130.6px;font-size:14px;color:#b4bcc4;letter-spacing:0.35px">Actions</div>
<div class="t" style="left:67.9px;top:173.3px;font-size:15px;color:#16915e;letter-spacing:-0.35px;font-weight:bold">Stocks</div>
<div class="t" style="left:105.5px;top:215.1px;font-size:14px;color:#50535f;letter-spacing:0.40px">Favoris</div>
<div class="t" style="left:106.5px;top:245.1px;font-size:14px;color:#50535f;letter-spacing:-0.24px">Stocks</div>
<div class="t" style="left:105.5px;top:275.1px;font-size:14px;color:#50535f;letter-spacing:0.08px">Niveau de Stock</div>
<div class="t" style="left:105.5px;top:305.1px;font-size:14px;color:#50535f;letter-spacing:0.58px">Mouvements</div>
<div class="t" style="left:105.5px;top:335.1px;font-size:14px;color:#50535f;letter-spacing:0.50px">Inventaires</div>
<div class="t" style="left:105.5px;top:365.1px;font-size:14px;color:#50535f;letter-spacing:0.30px">File d&#x27;Attente</div>
<div class="t" style="left:105.5px;top:395.1px;font-size:14px;color:#50535f;letter-spacing:0.31px">Données Techniques</div>
<div class="t" style="left:131.5px;top:425.1px;font-size:14px;color:#50535f;letter-spacing:0.13px">Stock Physique</div>
<div class="t" style="left:131.5px;top:455.1px;font-size:14px;color:#50535f;letter-spacing:0.16px">Stock Logique</div>
<div class="t" style="left:130.5px;top:485.1px;font-size:14px;color:#50535f;letter-spacing:0.51px">Divers</div>
<div class="t" style="left:131.5px;top:515.1px;font-size:14px;color:#50535f;letter-spacing:0.30px">Configurateur de Procédures de Stock</div>
<div class="t" style="left:130.5px;top:545.1px;font-size:14px;color:#50535f;letter-spacing:0.46px">Inventaires</div>
<div class="t" style="left:131.5px;top:575.1px;font-size:14px;color:#50535f;letter-spacing:0.07px">Transactions de Stock</div>
<div class="t" style="left:156.7px;top:605.1px;font-size:14px;color:#50535f;letter-spacing:0.31px">Transactions de Stock pour Fabrication</div>
<div class="t" style="left:156.7px;top:635.1px;font-size:14px;color:#50535f;letter-spacing:0.36px">Transactions de Stock pour Alimentation</div>
<div class="t" style="left:156.7px;top:665.1px;font-size:14px;color:#50535f;letter-spacing:0.24px">Transactions de Stock Co-Produits</div>
<div class="t" style="left:156.7px;top:695.1px;font-size:14px;color:#50535f;letter-spacing:0.29px">Transactions de Stock pour Expéditions</div>
<div class="t" style="left:156.7px;top:725.1px;font-size:14px;color:#50535f;letter-spacing:0.38px">Transactions de Stock pour Approvisionnements</div>
<div class="t" style="left:156.7px;top:755.1px;font-size:14px;color:#50535f;letter-spacing:0.29px">Transactions de Stock pour Retours Fournisseurs</div>
<div class="t" style="left:156.7px;top:785.1px;font-size:14px;color:#50535f;letter-spacing:0.25px">Transactions de Stock pour Retours Clients</div>
<div class="t" style="left:594.2px;top:164.8px;font-size:15px;color:#4d5060;letter-spacing:0.12px">OFs en Cours</div>
<div class="t" style="left:759.8px;top:164.8px;font-size:15px;color:#fff;letter-spacing:0.53px">Trans. Stk. Fab. :Transactions de Stock p...</div>
<div class="t" style="left:561.5px;top:191.8px;font-size:14px;color:#f4fafa;letter-spacing:0.24px;-webkit-text-stroke:0.3px #f4fafa">Trans. Stk. Fab. :Transactions de Stock pour Fabrication</div>
<div class="t" style="left:572.3px;top:217.2px;font-size:14.5px;color:#000;transform:scaleX(0.9274);transform-origin:0 0">Transaction</div>
<div class="t" style="left:902.1px;top:217.2px;font-size:14.5px;color:#000;transform:scaleX(0.9270);transform-origin:0 0">Désignation</div>
<div class="t" style="left:564.2px;top:239.2px;font-size:14.5px;color:#000;transform:scaleX(0.8861);transform-origin:0 0">01-ArtCde</div>
<div class="t" style="left:655.0px;top:239.2px;font-size:14.5px;color:#000;transform:scaleX(0.9028);transform-origin:0 0">Fabrication d&#x27;un article à la commande sur site 01</div>
<div class="t" style="left:564.2px;top:259.7px;font-size:14.5px;color:#000;transform:scaleX(0.8891);transform-origin:0 0">01-ArtStd</div>
<div class="t" style="left:655.0px;top:259.7px;font-size:14.5px;color:#000;transform:scaleX(0.9034);transform-origin:0 0">Fabrication d&#x27;un article standard sur site 01</div>
<div class="t" style="left:1267.8px;top:219.7px;font-size:14.5px;color:#000;transform:scaleX(0.9093);transform-origin:0 0">Définition</div>
<div class="t" style="left:1359.8px;top:219.7px;font-size:14.5px;color:#000;transform:scaleX(1.0545);transform-origin:0 0;font-weight:bold">Entrée / Sortie</div>
<div class="t" style="left:1498.1px;top:219.7px;font-size:14.5px;color:#000;transform:scaleX(0.9158);transform-origin:0 0">Déplacement</div>
<div class="t" style="left:1612.0px;top:219.7px;font-size:14.5px;color:#000;transform:scaleX(0.9129);transform-origin:0 0">Qui, Quand?</div>
<div class="t" style="left:1466.0px;top:251.2px;font-size:14.5px;color:#000;transform:scaleX(0.9224);transform-origin:0 0">Mouvements d&#x27;Entrées en Stock</div>
<div class="t" style="left:1265.8px;top:277.2px;font-size:14.5px;color:#000;transform:scaleX(0.9144);transform-origin:0 0">Définition</div>
<div class="t" style="left:1342.5px;top:277.2px;font-size:14.5px;color:#8c8c8c;transform:scaleX(0.9276);transform-origin:0 0">[LO] Locale</div>
<div class="t" style="left:1243.9px;top:303.2px;font-size:14.5px;color:#000;transform:scaleX(0.9283);transform-origin:0 0">Type de Mvt.</div>
<div class="t" style="left:1234.0px;top:329.7px;font-size:14.5px;color:#000;transform:scaleX(0.9071);transform-origin:0 0">Valeurs Défaut</div>
<div class="t" style="left:1372.2px;top:329.7px;font-size:14.5px;color:#000;transform:scaleX(1.0072);transform-origin:0 0">[+]</div>
<div class="t" style="left:1233.7px;top:362.2px;font-size:14.5px;color:#2a2a00;transform:scaleX(0.9076);transform-origin:0 0">Section Défaut</div>
<div class="t" style="left:1342.0px;top:362.2px;font-size:14.5px;color:#2a2a00;transform:scaleX(0.9047);transform-origin:0 0">01-EXP</div>
<div class="t" style="left:1525.7px;top:362.7px;font-size:14.5px;color:#000;transform:scaleX(0.8904);transform-origin:0 0">Produits Finis</div>
<div class="t" style="left:1286.2px;top:386.2px;font-size:14.5px;color:#000;transform:scaleX(0.8935);transform-origin:0 0">Règle</div>
<div class="t" style="left:1342.0px;top:386.2px;font-size:14.5px;color:#000;transform:scaleX(0.9190);transform-origin:0 0">StoTraFab</div>
<div class="t" style="left:1479.7px;top:386.2px;font-size:14.5px;color:#000;transform:scaleX(0.9251);transform-origin:0 0">Transaction de stock Fabrication</div>
<div class="t" style="left:1278.2px;top:412.2px;font-size:14.5px;color:#000;transform:scaleX(0.8276);transform-origin:0 0">Critères</div>
<div class="t" style="left:1464.1px;top:447.2px;font-size:14.5px;color:#000;transform:scaleX(0.9176);transform-origin:0 0">Mouvements de Sorties de Stock</div>
<div class="t" style="left:1265.8px;top:473.2px;font-size:14.5px;color:#000;transform:scaleX(0.9144);transform-origin:0 0">Définition</div>
<div class="t" style="left:1342.5px;top:473.2px;font-size:14.5px;color:#8c8c8c;transform:scaleX(0.9276);transform-origin:0 0">[LO] Locale</div>
<div class="t" style="left:1243.9px;top:499.2px;font-size:14.5px;color:#000;transform:scaleX(0.9283);transform-origin:0 0">Type de Mvt.</div>
<div class="t" style="left:1234.0px;top:525.7px;font-size:14.5px;color:#000;transform:scaleX(0.9071);transform-origin:0 0">Valeurs Défaut</div>
<div class="t" style="left:1372.2px;top:525.7px;font-size:14.5px;color:#000;transform:scaleX(1.0072);transform-origin:0 0">[+]</div>
<div class="t" style="left:1233.7px;top:558.2px;font-size:14.5px;color:#2a2a00;transform:scaleX(0.9076);transform-origin:0 0">Section Défaut</div>
<div class="t" style="left:1342.0px;top:558.2px;font-size:14.5px;color:#2a2a00;transform:scaleX(0.8892);transform-origin:0 0">01-FAB</div>
<div class="t" style="left:1526.6px;top:558.7px;font-size:14.5px;color:#000;transform:scaleX(0.9049);transform-origin:0 0">Zone Atelier</div>
<div class="t" style="left:1286.2px;top:582.2px;font-size:14.5px;color:#000;transform:scaleX(0.8935);transform-origin:0 0">Règle</div>
<div class="t" style="left:1342.0px;top:582.2px;font-size:14.5px;color:#000;transform:scaleX(0.9190);transform-origin:0 0">StoTraFab</div>
<div class="t" style="left:1479.7px;top:582.2px;font-size:14.5px;color:#000;transform:scaleX(0.9251);transform-origin:0 0">Transaction de stock Fabrication</div>
<div class="t" style="left:1278.2px;top:608.2px;font-size:14.5px;color:#000;transform:scaleX(0.8276);transform-origin:0 0">Critères</div>
<div class="t" style="left:1050.1px;top:353.9px;font-size:25.5px;color:#00cc00;transform:scaleX(0.9457);transform-origin:0 0;-webkit-text-stroke:1.1px #00cc00">Section entrée</div>
<div class="t" style="left:1057.0px;top:553.9px;font-size:25.5px;color:#00cc00;transform:scaleX(0.9412);transform-origin:0 0;-webkit-text-stroke:1.1px #00cc00">Section sortie</div>
<div class="a" style="left:126.9px;top:163.8px;width:29.2px;height:29.2px;border-radius:50%;background:#cccc00"></div>
<div class="a" style="left:419px;top:598.9px;width:29px;height:29px;border-radius:50%;background:#cccc00"></div>
<div class="a" style="left:525px;top:231.7px;width:29.4px;height:29.4px;border-radius:50%;background:#cccc00"></div>
<svg style="left:0;top:0;position:absolute" width="200" height="200"><path d="M141.6,172.6 V183.8 M141.6,172.8 Q140.4,174.6 138.2,175.4" stroke="#fff" stroke-width="1.9" fill="none"/></svg>
<div class="t" style="left:428.5px;top:605.5px;font-size:16.5px;color:#fff;letter-spacing:0.00px">2</div>
<div class="t" style="left:535.5px;top:237.5px;font-size:16.5px;color:#fff;letter-spacing:-1.70px">3</div>
</body></html>
